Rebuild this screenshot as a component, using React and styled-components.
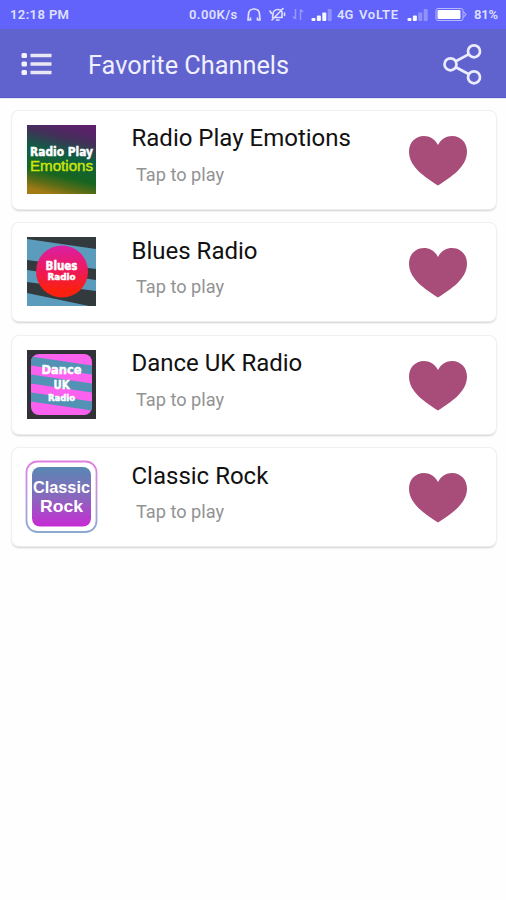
import React from "react";
import styled, { createGlobalStyle } from "styled-components";

const GlobalStyle = createGlobalStyle`
  body {
    margin: 0;
    background: #fff;
    font-family: Roboto, "Liberation Sans", sans-serif;
  }
`;

const Screen = styled.main`
  width: 506px;
  height: 900px;
  overflow: hidden;
  background: #fefefe;
`;

const StatusBar = styled.section`
  display: flex;
  align-items: center;
  height: 29px;
  padding-left: 10px;
  box-sizing: border-box;
  background: #6163fb;
  color: #dfe0ff;
  svg {
    display: block;
  }
`;

const StatusItem = styled.div`
  flex: none;
  width: ${({ $width }) => $width}px;
  margin-left: ${({ $gap }) => $gap || 0}px;
  font-size: 13px;
  line-height: 15px;
  font-weight: 600;
  letter-spacing: ${({ $spacing }) => $spacing || 0}px;
  white-space: nowrap;
`;

const Header = styled.header`
  display: flex;
  align-items: center;
  height: 69px;
  padding: 0 23px 0 21px;
  box-sizing: border-box;
  background: #6062cd;
  border-bottom: 1px solid #5759c4;
  svg {
    display: block;
    flex: none;
  }
`;

const Title = styled.h1`
  flex: 1;
  margin: 6px 0 0 36px;
  font-size: 25.3px;
  line-height: 32px;
  font-weight: 400;
  color: #f0f0ff;
`;

const List = styled.section`
  display: flex;
  flex-direction: column;
  gap: 14.5px;
  padding: 11.5px 10px 0 12px;
  border-top: 1px solid #e4e9fb;
`;

const Card = styled.article`
  display: flex;
  height: 98px;
  padding: 14px 29px 0 15px;
  box-sizing: border-box;
  border-radius: 7px;
  background: #fff;
  box-shadow: 0 0 1px 1px #efefee, 0 2px 2px #cfcfcf;
  svg {
    display: block;
    flex: none;
  }
`;

const Info = styled.div`
  flex: 1;
  padding-left: 36px;
  white-space: nowrap;
`;

const Name = styled.h2`
  margin: -1.5px 0 0 -0.5px;
  font-size: 24px;
  line-height: 30px;
  font-weight: 400;
  color: #111;
`;

const Hint = styled.p`
  margin: 9.5px 0 0 4px;
  font-size: 18.2px;
  line-height: 24px;
  color: #929292;
`;

const HeartIcon = styled.svg`
  margin-top: 11px;
`;

const Cover = styled.svg`
  width: 69px;
  height: 69px;
  overflow: visible;
`;

const round = "'DejaVu Sans', sans-serif";
const plain = "'Liberation Sans', sans-serif";

function CoverText({ children, size, length, color = "#fff", font = round, weight = 700, stroke = 0.5, ...rest }) {
  return (
    <text
      x="34.5"
      textAnchor="middle"
      textLength={length}
      lengthAdjust="spacingAndGlyphs"
      fontFamily={font}
      fontSize={size}
      fontWeight={weight}
      fill={color}
      stroke={color}
      strokeWidth={stroke}
      {...rest}
    >
      {children}
    </text>
  );
}

function EmotionsCover() {
  return (
    <Cover viewBox="0 0 69 69">
      <defs>
        <linearGradient id="emotions" x1="0.6" y1="0" x2="0.35" y2="1">
          <stop offset="0" stopColor="#5a2069" />
          <stop offset="0.18" stopColor="#442f5a" />
          <stop offset="0.42" stopColor="#0e5e43" />
          <stop offset="0.72" stopColor="#17661f" />
          <stop offset="0.86" stopColor="#586c17" />
          <stop offset="1" stopColor="#a37b15" />
        </linearGradient>
      </defs>
      <rect width="69" height="69" fill="url(#emotions)" />
      <CoverText y={30.5} size={12} length={63}>Radio Play</CoverText>
      <CoverText y={46} size={15} length={63} color="#cfe60c" font={plain} weight={400} stroke={0.4}>Emotions</CoverText>
    </Cover>
  );
}

function BluesCover() {
  return (
    <Cover viewBox="0 0 69 69">
      <defs>
        <linearGradient id="blues" x1="0" y1="0" x2="0" y2="1">
          <stop offset="0" stopColor="#db1fa5" />
          <stop offset="0.5" stopColor="#ee1a58" />
          <stop offset="0.85" stopColor="#f9200f" />
        </linearGradient>
      </defs>
      <rect width="69" height="69" fill="#5b9cbc" />
      <path d="M0 0H69V12L0 2Z" fill="#333a3d" />
      <path d="M0 23L69 32V43L0 33Z" fill="#333a3d" />
      <path d="M0 45L69 54V69H62L0 56Z" fill="#333a3d" />
      <circle cx="35" cy="34.5" r="26" fill="url(#blues)" />
      <CoverText y={32.5} size={12} length={32}>Blues</CoverText>
      <CoverText y={43} size={8.8} length={28}>Radio</CoverText>
    </Cover>
  );
}

function DanceCover() {
  return (
    <Cover viewBox="0 0 69 69">
      <defs>
        <clipPath id="danceClip">
          <rect x="4" y="4" width="61" height="61" rx="8" />
        </clipPath>
      </defs>
      <rect width="69" height="69" fill="#303237" />
      <g clipPath="url(#danceClip)">
        <rect width="69" height="69" fill="#fa61ef" />
        {[6, 24, 42].map((y) => (
          <path key={y} d={`M0 ${y}L69 ${y + 10}V${y + 19}L0 ${y + 9}Z`} fill="#5192b5" />
        ))}
      </g>
      <CoverText y={24} size={12.5} length={40}>Dance</CoverText>
      <CoverText y={39} size={13} length={16}>UK</CoverText>
      <CoverText y={51} size={8.8} length={27}>Radio</CoverText>
    </Cover>
  );
}

function RockCover() {
  return (
    <Cover viewBox="0 0 69 69">
      <defs>
        <linearGradient id="rock" x1="0" y1="0" x2="0" y2="1">
          <stop offset="0" stopColor="#5988b3" />
          <stop offset="0.5" stopColor="#8868bd" />
          <stop offset="1" stopColor="#c72bd3" />
        </linearGradient>
        <linearGradient id="rockRing" x1="0" y1="0" x2="0" y2="1">
          <stop offset="0" stopColor="#df80df" />
          <stop offset="0.55" stopColor="#b69ddd" />
          <stop offset="1" stopColor="#8ca9d2" />
        </linearGradient>
      </defs>
      <rect x="-0.5" y="-0.5" width="70" height="70.5" rx="11" fill="#fff" stroke="url(#rockRing)" strokeWidth="1.8" />
      <rect x="5" y="5" width="59" height="59.5" rx="8" fill="url(#rock)" />
      <CoverText y={31} size={17} length={57} font={plain} stroke={0}>Classic</CoverText>
      <CoverText y={49.5} size={17} length={43} font={plain} stroke={0}>Rock</CoverText>
    </Cover>
  );
}

function Signal({ bars }) {
  return (
    <svg width="22" height="15" viewBox="0 0 22 15" fill="#fff">
      {[3, 5.5, 8.5, 12].map((h, i) => (
        <rect key={h} x={i * 5.4 + 0.5} y={14 - h} width="4" height={h} rx="1" opacity={i < bars ? 0.95 : 0.3} />
      ))}
    </svg>
  );
}

const channels = [
  { name: "Radio Play Emotions", Art: EmotionsCover },
  { name: "Blues Radio", Art: BluesCover },
  { name: "Dance UK Radio", Art: DanceCover },
  { name: "Classic Rock", Art: RockCover },
];

export default function App() {
  return (
    <Screen>
      <GlobalStyle />
      <StatusBar>
        <StatusItem $width={60} $spacing={0.4}>12:18 PM</StatusItem>
        <StatusItem $width={50} $gap={119} $spacing={0.4}>0.00K/s</StatusItem>
        <StatusItem $width={16} $gap={7}>
          <svg width="16" height="15" viewBox="0 0 16 15" fill="none" stroke="currentColor" strokeWidth="1.7" strokeLinecap="round">
            <path d="M4.500 13H2L2.500 7.500C2.500 4 4.800 2 8 2S13.500 4 13.500 7.500L14 13H11.500M4.500 13V11M11.500 13V11" />
          </svg>
        </StatusItem>
        <StatusItem $width={17} $gap={7}>
          <svg width="17" height="15" viewBox="0 0 17 15" fill="none" stroke="currentColor" strokeWidth="1.6" strokeLinecap="round">
            <path d="M3.5 10.5L4 7.5C4 4.5 6 2.5 9 2.5C12 2.5 13.500 4.500 13 7L13 10.5H6M3 13L14 1.5M7.5 13H10M1 4L2.5 6.5M15.5 6V8.5" />
          </svg>
        </StatusItem>
        <StatusItem $width={12} $gap={6}>
          <svg width="12" height="15" viewBox="0 0 12 15" fill="none" stroke="#fff" strokeWidth="1.5" opacity="0.35">
            <path d="M3.5 2V12M1 9.5L3.5 12M8.5 13V2.5M8.5 2.5L11 5" />
          </svg>
        </StatusItem>
        <StatusItem $width={22} $gap={7}><Signal bars={3} /></StatusItem>
        <StatusItem $width={18} $gap={4}>4G</StatusItem>
        <StatusItem $width={41} $gap={4} $spacing={0.7}>VoLTE</StatusItem>
        <StatusItem $width={22} $gap={7}><Signal bars={2} /></StatusItem>
        <StatusItem $width={32} $gap={6}>
          <svg width="32" height="15" viewBox="0 0 32 15">
            <rect x="1" y="1.5" width="27" height="12" rx="2" fill="none" stroke="#b8baff" strokeWidth="1" />
            <rect x="2.5" y="3" width="23" height="9" rx="1" fill="#fff" />
            <path d="M28 4.5L31 7.5L28 10.5" fill="none" stroke="#a9abff" strokeWidth="1.2" />
          </svg>
        </StatusItem>
        <StatusItem $width={26} $gap={7} $spacing={-0.2}>81%</StatusItem>
      </StatusBar>
      <Header>
        <svg width="31" height="26" viewBox="0 0 31 26" fill="#e8e7f4">
          {[5, 13.5, 22].map((y) => (
            <g key={y}>
              <rect x="0.5" y={y - 2} width="5.5" height="5" rx="1.5" fill="#f4f4ff" />
              <rect x="9.5" y={y - 1.3} width="21" height="3.6" rx="0.5" />
            </g>
          ))}
        </svg>
        <Title>Favorite Channels</Title>
        <svg width="40" height="44" viewBox="0 0 40 44" fill="none" stroke="#ececff" strokeWidth="2.7">
          <circle cx="7.5" cy="23.3" r="6" />
          <circle cx="31" cy="10.3" r="6" />
          <circle cx="31" cy="36.3" r="6" />
          <path d="M12.8 20.3L26 13.1M12.8 26.3L26 33.3" />
        </svg>
      </Header>
      <List>
        {channels.map(({ name, Art }) => (
          <Card key={name}>
            <Art />
            <Info>
              <Name>{name}</Name>
              <Hint>Tap to play</Hint>
            </Info>
            <HeartIcon width="58" height="50" viewBox="0 0 58 50">
              <path d="M29 9C26 3 20.5 0 15 0C6 0 0 7 0 15.5C0 31 16 41 29 49.5C42 41 58 31 58 15.5C58 7 52 0 43 0C37.5 0 32 3 29 9Z" fill="#a84d79" />
            </HeartIcon>
          </Card>
        ))}
      </List>
    </Screen>
  );
}
